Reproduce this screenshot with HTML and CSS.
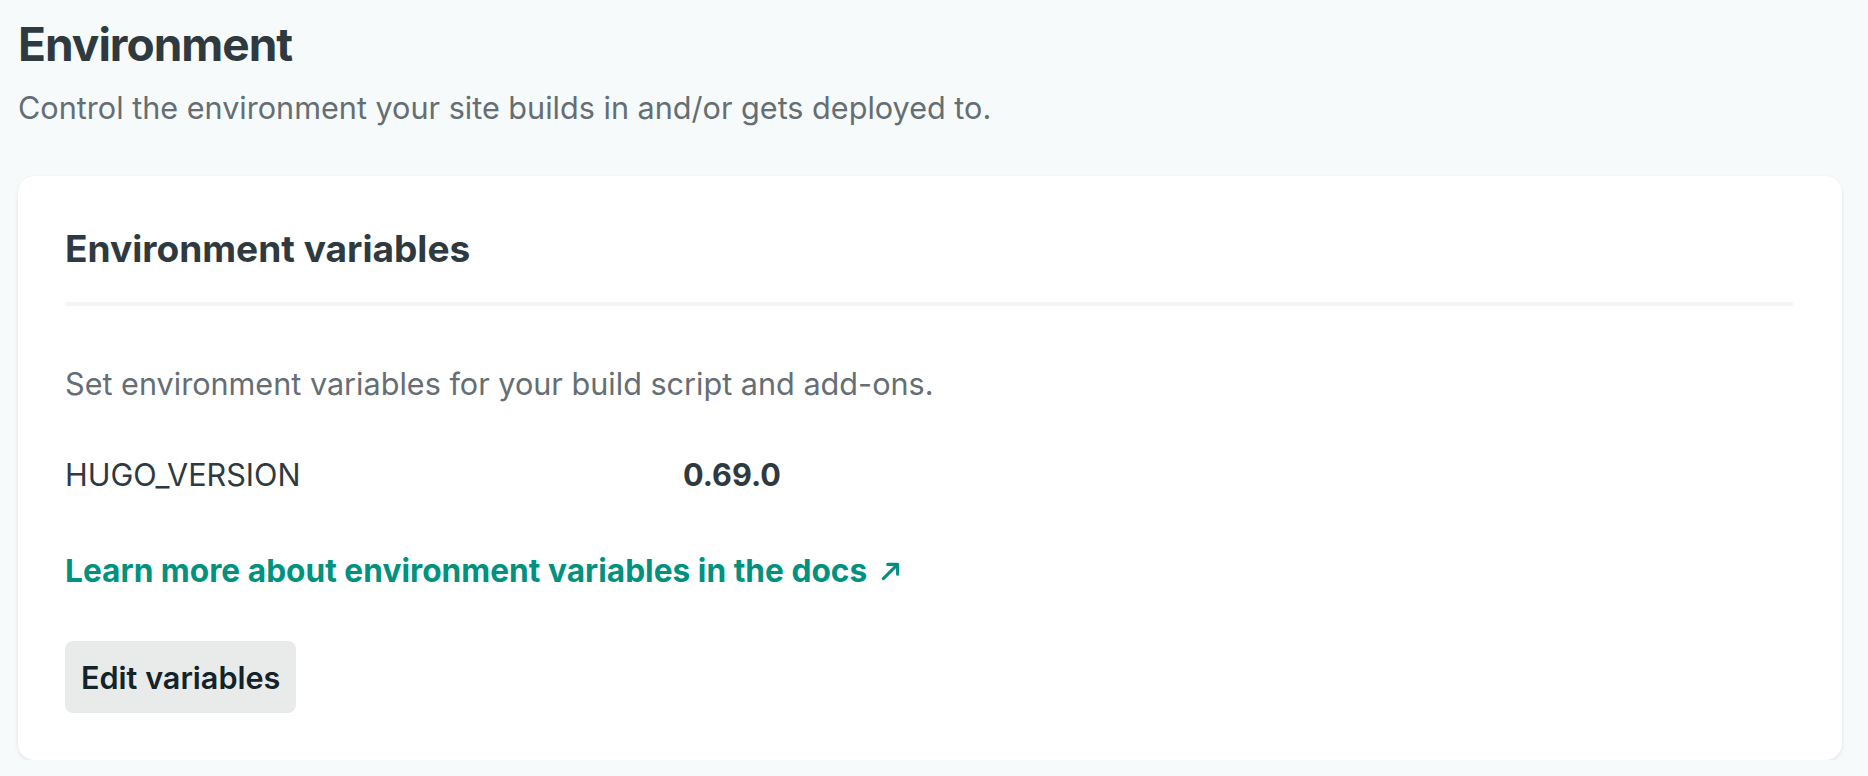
FILE: index.html
```html
<!DOCTYPE html>
<html lang="en">
<head>
<meta charset="utf-8">
<title>Environment</title>
<link rel="stylesheet" href="styles.css">
</head>
<body>
<main class="page">
  <header class="page-header">
    <h1 class="page-title">Environment</h1>
    <p class="page-desc">Control the environment your site builds in and/or gets deployed to.</p>
  </header>
  <section class="card">
    <h2 class="card-title">Environment variables</h2>
    <div class="card-body">
      <p class="card-desc">Set environment variables for your build script and add-ons.</p>
      <dl class="vars">
        <dt class="var-key">HUGO_VERSION</dt>
        <dd class="var-value">0.69.0</dd>
      </dl>
      <a class="doc-link" href="#">Learn more about environment variables in the docs<svg class="arrow" viewBox="0 0 20 20" width="20" height="20" aria-hidden="true"><path d="M3 17 L16 4 M7 4 H16 V13" fill="none" stroke="currentColor" stroke-width="2.8" stroke-linecap="round" stroke-linejoin="round"/></svg></a>
      <div class="actions">
        <button class="btn" type="button">Edit variables</button>
      </div>
    </div>
  </section>
</main>
</body>
</html>
```
FILE: styles.css
```css
* { box-sizing: border-box; }
html, body { margin: 0; padding: 0; }
body {
  background: #f7fafa;
  font-family: Inter, "Noto Sans", sans-serif;
  color: #2e3a40;
}
.page {
  padding: 15px 26px 0 18px;
}
.page-title {
  margin: 0;
  font-size: 46px;
  line-height: 58px;
  font-weight: 700;
  letter-spacing: -1px;
  color: #2e3a40;
}
.page-desc {
  margin: 12px 0 0;
  font-size: 30.6px;
  line-height: 45px;
  color: #646e73;
}
.card {
  margin-top: 46px;
  background: #fff;
  border-radius: 16px;
  box-shadow: 0 2px 4px rgba(14, 30, 37, 0.08), 0 0 1px rgba(14, 30, 37, 0.06);
  padding: 51px 49px 47px 47px;
}
.card-title {
  margin: 0;
  font-size: 37.1px;
  line-height: 44px;
  font-weight: 700;
  color: #2e3a40;
  padding-bottom: 31px;
  border-bottom: 4px solid #f4f6f6;
}
.card-body {
  padding-top: 55px;
}
.card-desc {
  margin: 0;
  font-size: 30.6px;
  line-height: 45px;
  color: #646e73;
}
.vars {
  display: grid;
  grid-template-columns: 618px 1fr;
  margin: 46px 0 0;
  font-size: 30.6px;
  line-height: 45px;
}
.var-key { margin: 0; color: #2e3a40; }
.var-value { margin: 0; font-weight: 700; color: #2e3a40; }
.doc-link {
  display: inline-flex;
  align-items: center;
  gap: 13px;
  margin-top: 51px;
  font-size: 31.7px;
  line-height: 45px;
  font-weight: 700;
  color: #00927f;
  text-decoration: none;
}
.arrow { width: 22px; height: 22px; }
.actions { margin-top: 48px; }
.btn {
  font-family: inherit;
  font-size: 30.6px;
  font-weight: 600;
  color: #14222a;
  background: #e9ebeb;
  border: 0;
  border-radius: 8px;
  height: 72px;
  padding: 0 16px;
  cursor: pointer;
}
```
